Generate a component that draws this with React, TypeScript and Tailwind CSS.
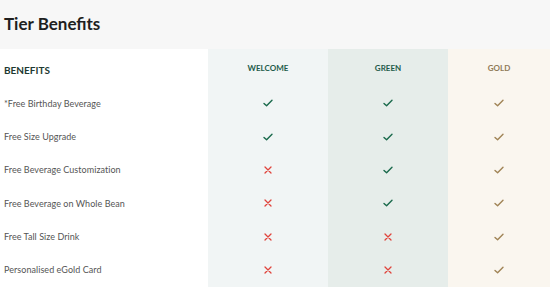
import React from "react";

const Check = ({ color }: { color: string }) => (
  <svg width="10" height="8" viewBox="0 0 10 8" fill="none">
    <path d="M1 4.4 L3.6 6.8 L9 1.2" stroke={color} strokeWidth="1.4" strokeLinecap="round" strokeLinejoin="round" />
  </svg>
);

const Cross = () => (
  <svg width="8" height="8" viewBox="0 0 8 8" fill="none">
    <path d="M1 1 L7 7 M7 1 L1 7" stroke="#e0443c" strokeWidth="1.3" strokeLinecap="round" />
  </svg>
);

const rows: [string, boolean, boolean, boolean][] = [
  ["*Free Birthday Beverage", true, true, true],
  ["Free Size Upgrade", true, true, true],
  ["Free Beverage Customization", false, true, true],
  ["Free Beverage on Whole Bean", false, true, true],
  ["Free Tall Size Drink", false, false, true],
  ["Personalised eGold Card", false, false, true],
];

export default function App() {
  return (
    <div className="w-[550px] h-[289px] overflow-hidden bg-white" style={{ fontFamily: "Lato, 'Open Sans', sans-serif" }}>
      <div className="h-[49px] bg-[#f7f7f7] flex items-center pl-[4px]">
        <h1 className="text-[17px] font-bold text-[#1f1f1f] mt-[-1px]">Tier Benefits</h1>
      </div>
      <div className="grid grid-cols-[208px_120px_120px_1fr]">
        <div className="h-[37.6px] flex items-center pl-[4px] pt-[6px] text-[10px] font-bold text-[#1e3932]">BENEFITS</div>
        <div className="h-[37.6px] bg-[#f1f5f5] flex justify-center pt-[13px] text-[8px] font-bold text-[#1e5c4a]">WELCOME</div>
        <div className="h-[37.6px] bg-[#e6edea] flex justify-center pt-[13px] text-[8px] font-bold text-[#1e5c4a]">GREEN</div>
        <div className="h-[37.6px] bg-[#faf6ef] flex justify-center pt-[13px] text-[8px] font-bold text-[#8f7a57]">GOLD</div>
        {rows.map(([label, a, b, c]) => (
          <React.Fragment key={label}>
            <div className="h-[33.4px] flex items-center pl-[4px] text-[9px] tracking-[0.05px] text-[#555]">{label}</div>
            <div className="h-[33.4px] bg-[#f1f5f5] flex items-center justify-center">
              {a ? <Check color="#1a6a4c" /> : <Cross />}
            </div>
            <div className="h-[33.4px] bg-[#e6edea] flex items-center justify-center">
              {b ? <Check color="#1a6a4c" /> : <Cross />}
            </div>
            <div className="h-[33.4px] bg-[#faf6ef] flex items-center justify-center">
              {c ? <Check color="#a08456" /> : <Cross />}
            </div>
          </React.Fragment>
        ))}
      </div>
    </div>
  );
}
